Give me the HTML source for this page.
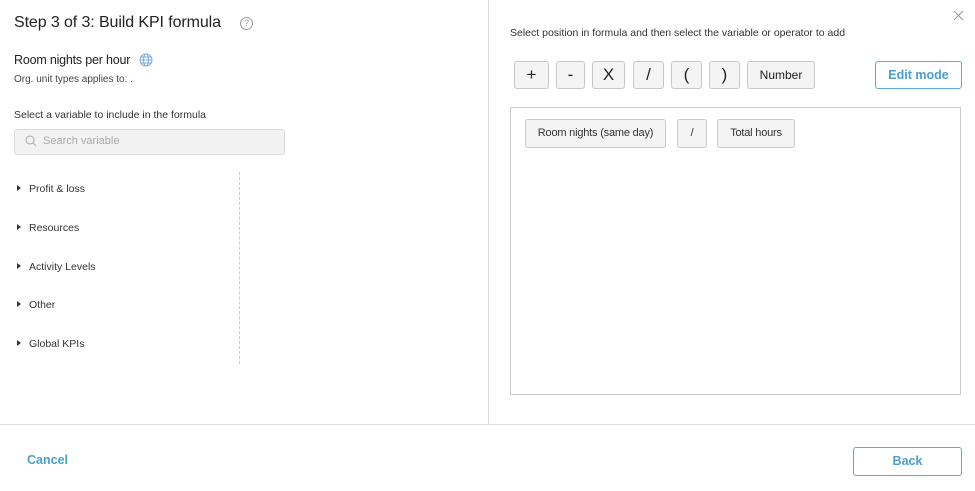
<!DOCTYPE html>
<html><head><style>
*{box-sizing:border-box;margin:0;padding:0}
body{width:975px;height:491px;background:#fff;font-family:"Liberation Sans",sans-serif;color:#222;position:relative;overflow:hidden}
.a{position:absolute}
.btn{position:absolute;top:61px;height:28px;border:1px solid #c8c8c8;border-radius:3px;background:#f4f4f4;font-size:17px;text-align:center;line-height:26px;color:#222}
.chip{position:absolute;top:119px;height:29px;border:1px solid #c8c8c8;border-radius:3px;background:#f4f4f4;font-size:11px;text-align:center;line-height:27px;color:#333;letter-spacing:-0.2px}
.tree{position:absolute;left:17px;font-size:10.5px;color:#333}
.tree:before{content:"";display:inline-block;border-left:4px solid #333;border-top:3px solid transparent;border-bottom:3px solid transparent;margin-right:8px;vertical-align:1px}
</style></head><body>
<div class="a" style="left:14px;top:14px;font-size:16px;color:#222;letter-spacing:-0.1px">Step 3 of 3: Build KPI formula</div>
<div class="a" style="left:240px;top:17px;width:13px;height:13px;border:1px solid #999;border-radius:50%;font-size:9px;color:#999;text-align:center;line-height:11px">?</div>
<div class="a" style="left:14px;top:53px;font-size:12.5px;letter-spacing:-0.2px">Room nights per hour</div>
<svg class="a" style="left:139px;top:53px" width="14" height="14" viewBox="0 0 14 14" fill="none" stroke="#7aa6d8" stroke-width="1"><circle cx="7" cy="7" r="6"/><ellipse cx="7" cy="7" rx="2.5" ry="6"/><path d="M1 7h12M2 4h10M2 10h10"/></svg>
<div class="a" style="left:14px;top:74px;font-size:10px;color:#444">Org. unit types applies to: .</div>
<div class="a" style="left:14px;top:109px;font-size:10.5px;color:#333">Select a variable to include in the formula</div>
<div class="a" style="left:14px;top:129px;width:271px;height:26px;border:1px solid #ddd;border-radius:3px;background:#f2f2f2"></div>
<svg class="a" style="left:25px;top:135px" width="12" height="12" viewBox="0 0 12 12" fill="none" stroke="#aaa"><circle cx="5" cy="5" r="4"/><path d="M8 8l3 3"/></svg>
<div class="a" style="left:43px;top:135px;font-size:11px;color:#aaa">Search variable</div>
<div class="a" style="left:239px;top:172px;height:192px;border-left:1px dashed #ccc"></div>
<div class="tree" style="top:183px">Profit &amp; loss</div>
<div class="tree" style="top:222px">Resources</div>
<div class="tree" style="top:261px">Activity Levels</div>
<div class="tree" style="top:299px">Other</div>
<div class="tree" style="top:338px">Global KPIs</div>
<div class="a" style="left:488px;top:0;height:424px;border-left:1px solid #ddd"></div>
<div class="a" style="left:0;top:424px;width:975px;border-top:1px solid #ddd"></div>
<svg class="a" style="left:953px;top:10px" width="11" height="11" viewBox="0 0 11 11" stroke="#999" stroke-width="1"><path d="M1 1l9 9M10 1l-9 9"/></svg>
<div class="a" style="left:510px;top:27px;font-size:10.5px;color:#333">Select position in formula and then select the variable or operator to add</div>
<div class="btn" style="left:514px;width:35px">+</div>
<div class="btn" style="left:556px;width:29px">-</div>
<div class="btn" style="left:592px;width:33px">X</div>
<div class="btn" style="left:633px;width:31px">/</div>
<div class="btn" style="left:671px;width:31px">(</div>
<div class="btn" style="left:709px;width:31px">)</div>
<div class="btn" style="left:747px;width:68px;font-size:12px">Number</div>
<div class="a" style="left:875px;top:61px;width:87px;height:28px;border:1px solid #5aa9d6;border-radius:3px;color:#4a9fd0;font-size:12.5px;font-weight:bold;text-align:center;line-height:26px">Edit mode</div>
<div class="a" style="left:510px;top:107px;width:451px;height:288px;border:1px solid #ccc"></div>
<div class="chip" style="left:525px;width:141px">Room nights (same day)</div>
<div class="chip" style="left:677px;width:30px">/</div>
<div class="chip" style="left:717px;width:78px">Total hours</div>
<div class="a" style="left:27px;top:453px;font-size:12.5px;font-weight:bold;color:#4a9fd0">Cancel</div>
<div class="a" style="left:853px;top:447px;width:109px;height:29px;border:1px solid #5aa9d6;border-radius:3px;color:#4a9fd0;font-size:12.5px;font-weight:bold;text-align:center;line-height:27px">Back</div>
</body></html>
